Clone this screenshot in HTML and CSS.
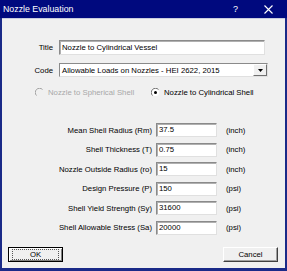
FILE: index.html
```html
<html>
    <head>
        <meta charset="utf-8">
        <link rel="stylesheet" href="styles.css">
    </head>
    <body>
        <div class="window">
            <div class="titlebar">
                <span class="caption">Nozzle Evaluation</span>
                <span class="btn-help">?</span>
                <svg class="btn-close" width="9" height="9" viewBox="0 0 9 9">
                    <path d="M0.5 0.5 L8.5 8.5 M8.5 0.5 L0.5 8.5" stroke="#fff" stroke-width="1.1" fill="none"/>
                </svg>
            </div>
            <div class="dialog">
                <div class="head-grid">
                    <label class="lbl">Title</label>
                    <div class="edit edit-title">Nozzle to Cylindrical Vessel</div>
                    <label class="lbl">Code</label>
                    <div class="combo">
                        <span class="combo-text">Allowable Loads on Nozzles - HEI 2622, 2015</span>
                        <span class="combo-btn"><svg width="5" height="3" viewBox="0 0 5 3"><path d="M0 0 H5 L2.5 3 Z" fill="#000"/></svg></span>
                    </div>
                </div>

                <div class="radios">
                    <div class="radio disabled">
                        <svg width="9" height="9" viewBox="0 0 9 9">
                            <path d="M7.5 1.5 A4 4 0 0 0 1.5 7.5" stroke="#a0a0a0" fill="none"/>
                        </svg>
                        <span>Nozzle to Spherical Shell</span>
                    </div>
                    <div class="radio">
                        <svg width="9" height="9" viewBox="0 0 9 9">
                            <circle cx="4.5" cy="4.5" r="3.5" fill="#fff"/>
                            <path d="M7.5 1.5 A4 4 0 0 0 1.5 7.5" stroke="#707070" fill="none"/>
                            <circle cx="4.5" cy="4.5" r="1.5" fill="#000"/>
                        </svg>
                        <span>Nozzle to Cylindrical Shell</span>
                    </div>
                </div>

                <div class="fields">
                    <label class="lbl">Mean Shell Radius (Rm)</label>
                    <div class="edit">37.5</div>
                    <span class="unit">(inch)</span>

                    <label class="lbl">Shell Thickness (T)</label>
                    <div class="edit">0.75</div>
                    <span class="unit">(inch)</span>

                    <label class="lbl">Nozzle Outside Radius (ro)</label>
                    <div class="edit">15</div>
                    <span class="unit">(inch)</span>

                    <label class="lbl">Design Pressure (P)</label>
                    <div class="edit">150</div>
                    <span class="unit">(psi)</span>

                    <label class="lbl">Shell Yield Strength (Sy)</label>
                    <div class="edit">31600</div>
                    <span class="unit">(psi)</span>

                    <label class="lbl">Shell Allowable Stress (Sa)</label>
                    <div class="edit">20000</div>
                    <span class="unit">(psi)</span>
                </div>

                <div class="buttons">
                    <button class="btn btn-default"><span class="focus">OK</span></button>
                    <button class="btn">Cancel</button>
                </div>
            </div>
        </div>
    </body>
</html>
```

FILE: styles.css
```css
body {
    margin: 0px;
    padding: 0px;
    font-family: "Liberation Sans", Arial, sans-serif;
    font-size: 7.75px;
    color: #000;
}

.window {
    width: 287px;
    height: 271px;
    display: flex;
    flex-direction: column;
    background: #1a2a88;
}

.titlebar {
    height: 18px;
    display: flex;
    align-items: center;
    background: #00097e;
    color: white;
    padding-left: 3px;
}

.caption {
    font-size: 8.8px;
    flex: 1;
}

.btn-help {
    font-size: 9px;
    width: 6px;
    margin-right: 25px;
}

.btn-close {
    margin-right: 14px;
}

.dialog {
    flex: 1;
    margin: 0px 2px 3px 2px;
    background: #f0f0f0;
    border-top: 1px solid #c8cce0;
    display: flex;
    flex-direction: column;
}

.lbl {
    text-align: right;
    white-space: nowrap;
}

.head-grid {
    margin-top: 21px;
    display: grid;
    grid-template-columns: 51px 1fr;
    column-gap: 6px;
    row-gap: 8px;
    align-items: center;
}

.edit {
    height: 15px;
    box-sizing: border-box;
    background: white;
    border: 1px solid;
    border-color: #8a8a8a #e0e0e0 #e0e0e0 #8a8a8a;
    box-shadow: inset 1px 1px 0 #b0b0b0;
    padding-left: 2px;
    line-height: 13px;
    white-space: nowrap;
}

.edit-title {
    width: 206px;
}

.combo {
    width: 209px;
    height: 14px;
    box-sizing: border-box;
    background: white;
    border: 1px solid;
    border-color: #8a8a8a #e0e0e0 #e0e0e0 #8a8a8a;
    display: flex;
    align-items: center;
}

.combo-text {
    flex: 1;
    padding-left: 2px;
    white-space: nowrap;
}

.combo-btn {
    width: 14px;
    height: 12px;
    box-sizing: border-box;
    background: #f0f0f0;
    border: 1px solid;
    border-color: #fff #707070 #707070 #fff;
    display: flex;
    align-items: center;
    justify-content: center;
}

.radios {
    margin-top: 9px;
    padding-left: 33px;
    height: 12px;
    display: flex;
    align-items: center;
}

.radio {
    display: flex;
    align-items: center;
    gap: 4px;
    width: 116px;
}

.radio.disabled {
    color: #a8a8a8;
}

.fields {
    margin-top: 25px;
    display: grid;
    grid-template-columns: 150px 61px auto;
    column-gap: 4px;
    row-gap: 5.5px;
    align-items: center;
}

.fields .edit {
    height: 14px;
    line-height: 12px;
}

.unit {
    padding-left: 5px;
}

.buttons {
    margin-top: 12px;
    padding: 0px 7px 0px 6px;
    display: flex;
    justify-content: space-between;
}

.btn {
    width: 55px;
    height: 15px;
    box-sizing: border-box;
    font-family: inherit;
    font-size: 7.75px;
    background: #f0f0f0;
    border: 1px solid;
    border-color: #fff #404040 #404040 #fff;
    box-shadow: inset -1px -1px 0 #a0a0a0;
    padding: 0px;
    margin: 0px;
}

.btn-default {
    border: 1px solid #000;
    box-shadow: inset 1px 1px 0 #fff, inset -1px -1px 0 #808080;
}

.focus {
    display: inline-block;
    width: 45px;
    outline: 1px dotted #555;
    line-height: 9px;
}
```
